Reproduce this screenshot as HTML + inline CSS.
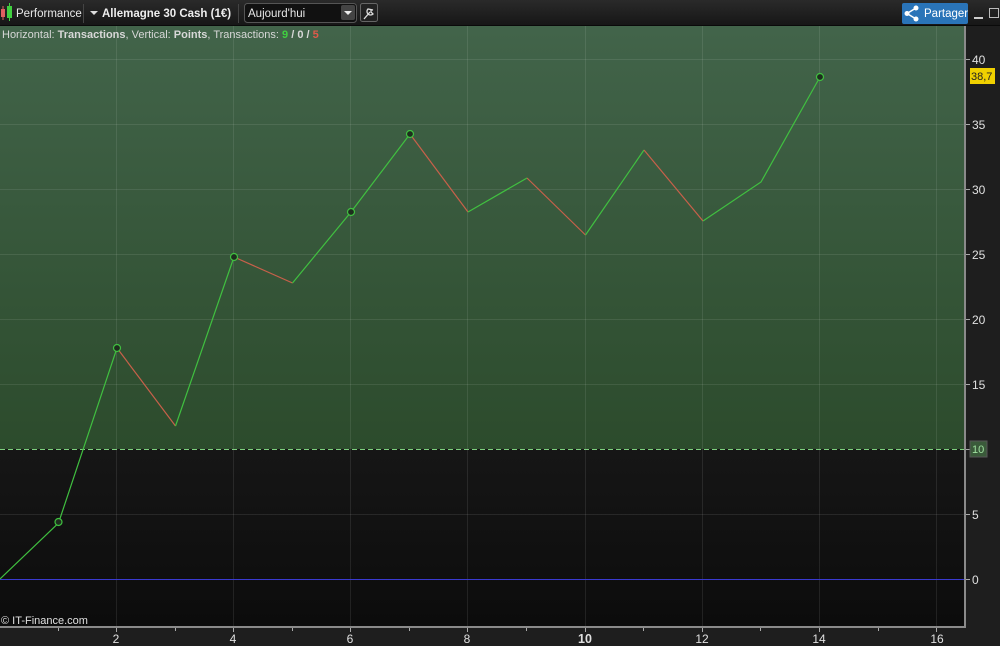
<!DOCTYPE html>
<html><head><meta charset="utf-8"><style>
html,body{margin:0;padding:0;background:#1e1e1e;width:1000px;height:646px;overflow:hidden;font-family:"Liberation Sans",Arial,sans-serif}
svg text{font-family:"Liberation Sans",Arial,sans-serif}
</style></head><body>
<svg width="1000" height="646" viewBox="0 0 1000 646" xmlns="http://www.w3.org/2000/svg">
<defs>
<linearGradient id="g" x1="0" y1="0" x2="0" y2="1">
<stop offset="0" stop-color="#42644a"/><stop offset="1" stop-color="#2c4b2c"/></linearGradient>
<linearGradient id="d" x1="0" y1="0" x2="0" y2="1">
<stop offset="0" stop-color="#161616"/><stop offset="1" stop-color="#0c0c0c"/></linearGradient>
<linearGradient id="tb" x1="0" y1="0" x2="0" y2="1">
<stop offset="0" stop-color="#2a2a2a"/><stop offset="1" stop-color="#161616"/></linearGradient>
</defs>
<rect x="0" y="0" width="1000" height="26" fill="url(#tb)"/>
<rect x="0" y="25" width="1000" height="1" fill="#0a0a0a"/>
<rect x="1" y="9" width="4" height="8" fill="#e06060"/><rect x="2.5" y="6" width="1" height="14" fill="#e06060"/>
<rect x="7" y="6" width="5" height="12" fill="#40d040"/><rect x="9" y="3" width="1" height="18" fill="#40d040"/>
<text x="16" y="17" font-size="11.5" fill="#e8e8e8">Performance</text>
<rect x="83" y="4" width="1" height="19" fill="#444"/>
<path d="M90 11 L98 11 L94 15 Z" fill="#ddd"/>
<text x="102" y="17" font-size="11.5" font-weight="bold" fill="#eee">Allemagne 30 Cash (1€)</text>
<rect x="238" y="4" width="1" height="19" fill="#444"/>
<rect x="244.5" y="3.5" width="112" height="19" rx="3" fill="#111" stroke="#555"/>
<text x="248" y="17" font-size="11.5" fill="#e8e8e8">Aujourd'hui</text>
<rect x="341" y="5" width="14" height="15" rx="2" fill="#444"/>
<path d="M344 11 L352 11 L348 15 Z" fill="#eee"/>
<rect x="360.5" y="3.5" width="17" height="18" rx="2" fill="#222" stroke="#666"/>
<path d="M364 19 L370 12 M368 9 a3.5 3.5 0 1 0 5 5 l-2-2 l0-2 l2 0 z" stroke="#ddd" stroke-width="1.3" fill="none"/>
<rect x="902" y="3" width="66" height="21" rx="2" fill="#2a74b8"/>
<circle cx="907" cy="13.5" r="2.5" fill="#fff"/><circle cx="916" cy="8" r="2.5" fill="#fff"/><circle cx="916" cy="19" r="2.5" fill="#fff"/>
<path d="M907 13.5 L916 8 M907 13.5 L916 19" stroke="#fff" stroke-width="1.5"/>
<text x="924" y="17" font-size="11.5" fill="#fff">Partager</text>
<rect x="974" y="17" width="9" height="2" fill="#ccc"/>
<rect x="989.5" y="8.5" width="9" height="9" fill="none" stroke="#bbb"/>
<rect x="0" y="26" width="964" height="423" fill="url(#g)"/>
<rect x="0" y="449" width="964" height="177" fill="url(#d)"/>
<rect x="964" y="26" width="36" height="620" fill="#1e1e1e"/>
<rect x="0" y="626" width="964" height="20" fill="#1e1e1e"/>
<rect x="964" y="26" width="2" height="602" fill="#8a8a8a"/>
<rect x="0" y="626" width="966" height="2" fill="#8a8a8a"/>
<g stroke="#ffffff" stroke-opacity="0.09" stroke-width="1">
<path d="M0 59.5H964M0 124.5H964M0 189.5H964M0 254.5H964M0 319.5H964M0 384.5H964M0 514.5H964"/>
<path d="M116.5 26V626M233.5 26V626M350.5 26V626M467.5 26V626M585.5 26V626M702.5 26V626M819.5 26V626M936.5 26V626"/>
</g>
<line x1="0" y1="449.5" x2="964" y2="449.5" stroke="#7fd07f" stroke-dasharray="5,3"/>
<rect x="0" y="579" width="964" height="1" fill="#3a3ad0"/>
<g stroke="#aaa"><path d="M966 59.5h4M966 124.5h4M966 189.5h4M966 254.5h4M966 319.5h4M966 384.5h4M966 449.5h4M966 514.5h4M966 579.5h4"/></g>
<g font-size="12" fill="#e0e0e0">
<text x="972" y="64">40</text><text x="972" y="129">35</text><text x="972" y="194">30</text>
<text x="972" y="259">25</text><text x="972" y="324">20</text><text x="972" y="389">15</text>
<text x="972" y="519">5</text><text x="972" y="584">0</text></g>
<rect x="970" y="441" width="17" height="16" fill="#3a5a3a" stroke="#555"/>
<text x="972" y="453" font-size="11" fill="#9fe09f">10</text>
<rect x="970" y="68" width="25" height="16" fill="#f0d000"/>
<text x="971" y="80" font-size="11" fill="#222">38,7</text>
<g stroke="#aaa"><path d="M58.5 628v3M116.5 628v4M175.5 628v3M233.5 628v4M292.5 628v3M350.5 628v4M409.5 628v3M467.5 628v4M526.5 628v3M585.5 628v4M643.5 628v3M702.5 628v4M760.5 628v3M819.5 628v4M878.5 628v3M936.5 628v4"/></g>
<g font-size="12" fill="#e0e0e0" text-anchor="middle">
<text x="116" y="643">2</text><text x="233" y="643">4</text><text x="350" y="643">6</text><text x="467" y="643">8</text>
<text x="585" y="643" font-weight="bold" font-size="12.5">10</text><text x="702" y="643">12</text><text x="819" y="643">14</text><text x="937" y="643">16</text></g>
<text x="2" y="38" font-size="11" fill="#d8d8d8">Horizontal: <tspan font-weight="bold">Transactions</tspan>, Vertical: <tspan font-weight="bold">Points</tspan>, Transactions: <tspan fill="#40d040" font-weight="bold">9</tspan> <tspan font-weight="bold">/ 0 /</tspan> <tspan fill="#e05a4a" font-weight="bold">5</tspan></text>
<text x="1" y="624" font-size="11" fill="#e0e0e0">© IT-Finance.com</text>
<g stroke-width="1.2" fill="none">
<polyline points="0,579 58.5,523 117,348" stroke="#40c040"/>
<polyline points="117,348 175.5,426" stroke="#c8604a"/>
<polyline points="175.5,426 234,257" stroke="#40c040"/>
<polyline points="234,257 292.5,283" stroke="#c8604a"/>
<polyline points="292.5,283 351,212 410,134" stroke="#40c040"/>
<polyline points="410,134 468,212" stroke="#c8604a"/>
<polyline points="468,212 527,178" stroke="#40c040"/>
<polyline points="527,178 585.5,235" stroke="#c8604a"/>
<polyline points="585.5,235 644,150" stroke="#40c040"/>
<polyline points="644,150 703,221" stroke="#c8604a"/>
<polyline points="703,221 761,182 820,77" stroke="#40c040"/>
</g>
<g stroke="#40c040" stroke-width="1.2" fill="#1e2e1e">
<circle cx="58.5" cy="522" r="3.5"/><circle cx="117" cy="348" r="3.5"/><circle cx="234" cy="257" r="3.5"/>
<circle cx="351" cy="212" r="3.5"/><circle cx="410" cy="134" r="3.5"/><circle cx="820" cy="77" r="3.5"/>
</g>
</svg>
</body></html>
